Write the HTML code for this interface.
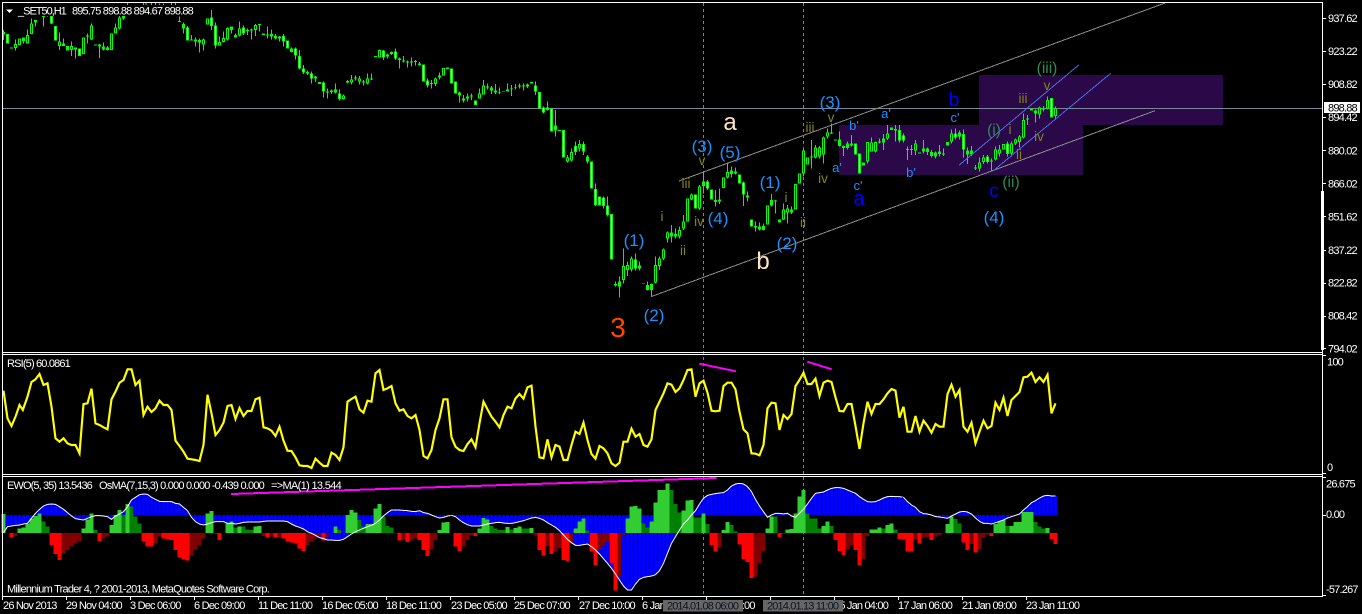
<!DOCTYPE html>
<html><head><meta charset="utf-8"><title>_SET50,H1</title>
<style>html,body{margin:0;padding:0;background:#000;width:1362px;height:614px;overflow:hidden}svg{display:block}text{font-family:"Liberation Sans",sans-serif}.t{fill:#fff;font-size:11px;letter-spacing:-.8px}.w{fill:#1e90ff;font-size:17px;text-anchor:middle}.o{fill:#85851c;font-size:13.5px;text-anchor:middle}.c{fill:#1e90ff;font-size:13px;text-anchor:middle}.g{fill:#2e8b57;font-size:15.5px;text-anchor:middle}</style></head>
<body>
<svg width="1362" height="614" viewBox="0 0 1362 614" xmlns="http://www.w3.org/2000/svg">
<defs>
<pattern id="pa" width="12" height="12" patternUnits="userSpaceOnUse" patternTransform="translate(5.5)"><rect width="9" height="12" fill="#0000ff"/></pattern>
<pattern id="pb" width="12" height="12" patternUnits="userSpaceOnUse" patternTransform="translate(-.5)"><rect width="9" height="12" fill="#0000ff"/></pattern>
</defs>
<rect width="1362" height="614" fill="#000"/>
<!-- purple zones -->
<rect x="979" y="75" width="244" height="50" fill="#2b0848"/>
<rect x="839" y="125" width="244" height="50" fill="#2b0848"/>
<!-- grid -->
<path d="M3 108.5H1322" stroke="#778899" stroke-width="1" shape-rendering="crispEdges"/>
<path d="M703.5 3V596M803.5 3V596" stroke="#808080" stroke-width="1" stroke-dasharray="3 3" shape-rendering="crispEdges"/>
<!-- candles A -->
<g transform="translate(.167 0) scale(.33333)" fill="none" shape-rendering="crispEdges">
<path stroke="#00ff00" stroke-width="3" d="M10 90V120M46 118V152M70 113V130M82 88V130M94 55V102M106 60V80M130 48V80M142 46V50M154 48V72M178 98V150M190 115V138M214 125V168M226 142V176M238 145V168M262 100V130M274 70V120M298 132V174M310 128V152M322 138V152M346 70V100M358 45V88M370 48V60M382 6V15M430 6V15M438 6V15M454 6V15M466 6V15M478 10V15M490 10V15M514 6V15M526 6V15M538 50V65M550 68V100M562 78V122M574 105V122M586 112V140M598 115V158M610 115V152M634 30V90M646 68V145M658 110V136M670 95V128M682 82V122M694 80V100M706 100V113M718 64V110M730 76V105M742 86V105M754 85V118M766 72V108M778 72V95M802 80V116M814 88V118M826 102V118M838 108V125M850 102V140M874 142V158M886 142V178M898 150V208M910 195V222M922 212V225M934 215V250M946 228V246M970 245V293M982 265V296M994 268V282M1006 250V280M1018 268V302M1030 283V298M1042 240V250M1054 225V254M1066 226V242M1078 228V254M1090 240V256M1102 220V254M1114 220V240M1138 148V172M1150 150V180M1162 160V176M1174 155V165M1186 146V180M1198 172V206M1210 168V188M1222 182V202M1234 172V200M1246 180V196M1258 186V196M1282 235V262M1294 240V266M1306 232V258M1318 218V238"/>
<path stroke="#00ff00" stroke-width="9" d="M10 96V104M22 102V130M34 142V146M46 132V144M58 115V135M70 113V123M82 105V130M94 70V102M106 60V68M130 48V51M154 48V70M166 78V122M178 124V138M190 130V138M202 138V152M214 138V150M226 143V148M238 145V168M250 112V162M262 106V110M274 76V118M286 133V137M298 133V140M310 140V148M322 142V150M334 100V150M346 82V100M358 52V86M370 48V55M538 63V66M550 72V86M562 82V122M574 119V122M586 118V124M598 120V128M610 118V134M622 55V74M634 52V78M646 76V136M658 126V136M670 114V126M682 84V118M694 80V90M706 105V112M718 85V106M730 82V100M742 90V93M754 89V92M766 75V90M778 72V75M790 100V105M802 104V107M814 102V110M826 108V115M838 110V116M850 108V124M862 122V146M874 146V156M886 145V166M898 168V206M910 205V218M922 216V220M934 220V236M946 230V236M958 246V252M970 248V275M982 274V278M994 272V276M1006 268V277M1018 280V297M1030 286V297M1042 243V247M1054 238V248M1066 232V236M1078 235V245M1090 245V248M1102 235V251M1114 235V238M1126 168V171M1138 150V172M1150 152V172M1162 164V170M1174 156V162M1186 154V176M1198 175V180M1210 181V184M1222 184V188M1234 185V188M1246 183V186M1258 190V195M1270 194V244M1282 242V256M1294 249V252M1306 235V252M1318 226V232M1330 204V226M1342 203V207"/>
<path stroke="#fff" stroke-width="3" d="M22 105V127M166 81V119M238 148V165M562 85V119M646 79V133M862 125V143M898 171V203M970 251V272M1270 197V241M886 148V163M1018 283V294M1186 157V173M154 51V67M634 55V75M730 85V97M1150 155V169M1282 245V253M850 111V121M910 208V215M934 223V233"/>
<path stroke="#000" stroke-width="3" d="M58 118V132M82 108V127M94 73V99M250 115V159M274 79V115M334 103V147M346 85V97M358 55V83M622 58V71M682 87V115M718 88V103M766 78V87M1102 238V248M1138 153V169M1306 238V249M1330 207V223M1030 289V294M46 135V141M178 127V135M214 141V147M610 121V131M658 129V133M670 117V123M1054 241V245M1078 238V242"/>
</g>
<!-- candles D -->
<g transform="translate(450.167 0) scale(.33333)" fill="none" shape-rendering="crispEdges">
<path stroke="#00ff00" stroke-width="3" d="M28 275V308M40 285V308M52 280V305M64 280V300M88 265V296M100 240V284M112 250V268M124 258V282M136 252V282M148 262V282M172 250V275M184 255V288M196 252V268M208 250V266M220 250V272M232 250V264M256 245V285M280 320V340M292 304V332"/>
<path stroke="#00ff00" stroke-width="9" d="M4 205V250M16 245V280M28 278V286M40 295V302M52 290V296M64 287V290M76 302V315M88 280V296M100 256V283M112 259V262M124 263V272M136 272V278M148 277V279M160 274V276M172 268V274M184 265V267M196 261V263M208 257V259M220 257V259M232 253V260M244 246V250M256 256V274M268 276V326M280 323V338M292 323V330"/>
<path stroke="#fff" stroke-width="3" d="M4 208V247M16 248V277M268 279V323M256 259V271M76 305V312M280 326V335"/>
<path stroke="#000" stroke-width="3" d="M88 283V293M100 259V280"/>
</g>
<!-- candles B -->
<g transform="translate(450.167 80) scale(.33333)" fill="none" shape-rendering="crispEdges">
<path stroke="#00ff00" stroke-width="3" d="M316 90V170M352 225V248M364 205V245M376 185V225M388 180V215M400 185V225M412 225V250M436 310V378M460 350V385M472 350V410M496 605V620M508 590V652M520 505V610M532 545V588M544 530V575M556 520V572M568 545V572M592 605V632M604 610V650M616 530V610M628 530V570M640 505V540M652 455V488M664 435V488M676 445V475M688 440V476M700 405V450M724 340V360M748 315V390M760 275V340M772 300V330M796 330V380M808 325V372M832 248V295M844 260V292M856 262V284M880 305V378M892 335V365M916 425V455M928 428V452M940 430V452M964 342V380M976 360V400M1000 370V420M1012 375V430M1024 380V402M1060 205V290M1084 180V265M1096 195V235M1108 198V235M1120 170V250M1132 145V175M1144 130V162M1168 155V200M1180 196V228M1192 185V208M1204 165V200M1252 186V250M1264 172V215M1276 185V218M1288 175V190"/>
<path stroke="#00ff00" stroke-width="9" d="M304 85V155M316 136V152M328 150V153M340 150V232M352 232V244M364 216V242M376 198V216M388 192V205M400 192V214M412 230V244M424 244V325M436 327V375M448 350V376M460 352V378M472 376V405M484 402V538M496 612V616M508 605V620M520 558V600M532 555V570M544 535V568M556 538V565M568 556V566M580 609V611M592 615V630M604 612V630M616 555V608M628 535V558M640 508V536M652 458V476M664 458V470M676 462V470M688 450V470M700 424V446M712 355V425M724 344V358M736 344V386M748 320V385M760 304V318M772 304V326M784 328V358M796 360V366M808 358V364M820 292V324M832 276V292M844 272V282M856 274V280M868 284V310M880 308V344M892 346V352M904 418V440M916 438V442M928 440V448M940 438V450M952 376V434M964 360V376M976 361V364M988 418V428M1000 388V418M1012 386V398M1024 388V398M1036 312V388M1048 280V310M1060 212V280M1072 232V254M1084 229V232M1096 202V232M1108 202V230M1120 172V224M1132 158V170M1144 157V160M1156 178V182M1168 178V198M1180 198V204M1192 190V204M1204 190V196M1216 190V224M1228 220V280M1240 248V256M1252 186V244M1264 188V214M1276 186V214M1288 185V188"/>
<path stroke="#fff" stroke-width="3" d="M304 88V152M340 153V229M376 201V213M424 247V322M436 330V372M448 353V373M460 355V375M472 379V402M484 405V535M736 347V383M784 331V355M868 287V307M880 311V341M904 421V437M1216 193V221M1228 223V277M400 195V211M772 307V323M556 541V562"/>
<path stroke="#000" stroke-width="3" d="M352 235V241M364 219V239M388 195V202M520 561V597M532 558V567M544 538V565M616 558V605M628 538V555M640 511V533M652 461V473M688 453V467M700 427V443M712 358V422M724 347V355M748 323V382M820 295V321M832 279V289M952 379V431M1000 391V415M1012 389V395M1036 315V385M1048 283V307M1060 215V277M1072 235V251M1096 205V229M1108 205V227M1120 175V221M1132 161V167M1252 189V241M1264 191V211M1276 189V211"/>
</g>
<!-- candles C -->
<g transform="translate(880.167 40) scale(.33333)" fill="none" shape-rendering="crispEdges">
<path stroke="#00ff00" stroke-width="3" d="M10 282V330M22 255V300M46 255V305M58 255V308M70 280V308M82 320V360M94 315V345M106 300V345M130 300V340M142 322V345M154 330V352M166 335V355M178 315V350M190 325V348M214 268V310M226 265V298M238 272V298M250 268V352M262 322V372M274 318V348M286 375V390M298 352V395M310 345V372M322 345V370M334 355V395M346 320V362M358 315V350M382 305V350M394 305V350M406 295V315M418 285V322M430 220V296M442 225V255M466 208V248M478 200V236M490 198V215M502 170V208M526 200V238"/>
<path stroke="#00ff00" stroke-width="9" d="M10 295V308M22 280V296M34 262V270M46 267V272M58 270V302M70 286V302M82 327V330M94 327V330M106 310V332M118 337V340M130 326V334M142 326V336M154 336V348M166 338V350M178 335V342M190 341V344M202 306V316M214 280V305M226 280V292M238 278V290M250 282V328M262 332V344M274 332V344M286 383V386M298 368V386M310 352V366M322 350V366M334 361V364M346 328V358M358 328V340M370 312V328M382 310V342M394 310V340M406 298V310M418 290V306M430 240V292M442 235V238M454 206V212M466 212V220M478 202V224M490 205V208M502 180V205M514 174V232M526 206V228"/>
<path stroke="#fff" stroke-width="3" d="M58 273V299M70 289V299M226 283V289M250 285V325M322 353V363M382 313V339M514 177V229"/>
<path stroke="#000" stroke-width="3" d="M22 283V293M106 313V329M214 283V302M298 371V383M310 355V363M346 331V355M358 331V337M370 315V325M394 313V337M406 301V307M418 293V303M430 243V289M478 205V221M502 183V202M526 209V225"/>
</g>
<!-- channels -->
<g fill="none" shape-rendering="crispEdges">
<path d="M679 181L1165 3M651 296.7L1155 110.7" stroke="#8c8c8c" stroke-width="1"/>
<path d="M959 165.3L1078.7 65M993.3 170.7L1110.7 73.3" stroke="#4a6de5" stroke-width="1"/>
</g>
<!-- indicators left -->
<g transform="translate(.167 350) scale(.33333)" fill="none">
<polyline stroke="#ffff00" stroke-width="6.5" points="10,122 22,205 34,228 46,200 58,165 68,180 82,140 94,96 106,88 118,72 130,105 142,100 154,170 166,265 178,275 190,265 202,280 214,285 226,285 238,310 250,162 262,160 274,116 286,220 298,225 310,232 322,238 334,148 346,125 358,98 370,90 382,58 394,58 406,105 418,92 430,195 442,170 454,186 466,175 478,152 490,165 502,165 514,180 526,272 538,288 550,305 562,326 574,328 586,330 598,333 610,285 622,134 634,190 646,255 658,240 670,218 682,168 694,165 706,207 718,174 730,198 742,183 754,183 766,148 778,143 790,232 802,235 814,242 826,258 838,230 850,272 862,302 874,303 886,322 898,346 910,348 922,348 934,354 946,326 958,338 970,348 982,348 994,308 1006,315 1018,330 1030,292 1042,155 1054,147 1066,140 1078,178 1090,188 1102,152 1114,155 1126,70 1138,60 1150,120 1162,115 1174,108 1186,160 1198,182 1210,178 1222,198 1234,205 1246,195 1258,240 1270,318 1282,325 1294,300 1306,240 1318,205 1330,148 1342,148 1354,262"/>
<polygon fill="url(#pa)" points="5,495 5,548 10,548 22,530 34,528 46,526 58,525 70,522 82,520 94,505 106,490 118,478 130,468 142,463 154,462 166,463 178,470 190,478 202,488 214,498 226,506 238,508 250,510 262,505 274,500 286,497 298,497 310,498 322,500 334,508 346,498 358,492 370,485 382,470 394,450 406,442 418,434 430,432 442,433 454,442 466,448 478,454 490,455 502,455 514,455 526,460 538,462 550,472 562,482 574,502 586,515 598,522 610,525 622,522 634,518 646,515 658,515 670,515 682,520 694,520 706,522 718,520 730,517 742,516 754,516 766,516 778,516 790,514 802,513 814,513 826,513 838,513 850,513 862,515 874,522 886,528 898,532 910,537 922,545 934,550 946,556 958,563 970,566 982,570 994,570 1006,571 1018,571 1030,568 1042,560 1054,552 1066,545 1078,540 1090,535 1102,530 1114,526 1126,520 1138,510 1150,498 1162,488 1174,480 1186,480 1198,480 1210,481 1222,482 1234,484 1246,485 1258,482 1270,488 1282,490 1294,495 1306,500 1318,504 1330,502 1342,498 1350,497 1350,495"/>
<g shape-rendering="crispEdges" stroke-width="12">
<path stroke="#32cd32" d="M10 549V492M58 549V535M70 549V533M82 549V520M94 549V505M106 549V498M118 549V490M250 549V535M262 549V508M274 549V490M334 549V525M346 549V495M358 549V480M382 549V462M622 549V490M634 549V483M682 549V520M694 549V515M718 549V530M766 549V530M778 549V528M1006 549V530M1042 549V495M1054 549V480M1066 549V488M1102 549V522M1114 549V522M1126 549V475M1138 549V462M1318 549V540M1330 549V518M1342 549V516"/>
<path stroke="#008000" d="M130 549V515M142 549V530M286 549V540M370 549V495M394 549V470M406 549V500M418 549V520M706 549V533M730 549V530M742 549V538M754 549V540M1018 549V540M1078 549V510M1090 549V530M1150 549V500M1162 549V528M1174 549V533"/>
<path stroke="#ff0000" d="M34 549V563M154 549V585M166 549V612M178 549V630M298 549V573M430 549V575M442 549V590M454 549V590M490 549V565M502 549V568M514 549V570M526 549V600M538 549V622M550 549V628M562 549V632M658 549V570M802 549V563M826 549V562M850 549V565M862 549V575M874 549V578M886 549V580M898 549V595M910 549V603M970 549V572M1198 549V572M1222 549V576M1258 549V570M1270 549V600M1282 549V618"/>
<path stroke="#800000" d="M46 549V558M190 549V610M202 549V600M214 549V590M226 549V580M238 549V575M310 549V565M322 549V560M466 549V580M478 549V560M574 549V616M586 549V598M598 549V585M610 549V565M646 549V552M790 549V558M814 549V560M838 549V562M922 549V585M934 549V575M946 549V565M958 549V558M982 549V560M1186 549V551M1210 549V570M1234 549V572M1246 549V565M1294 549V598M1306 549V570"/>
</g>
<polyline stroke="#fff" stroke-width="3" points="10,548 22,530 34,528 46,526 58,525 70,522 82,520 94,505 106,490 118,478 130,468 142,463 154,462 166,463 178,470 190,478 202,488 214,498 226,506 238,508 250,510 262,505 274,500 286,497 298,497 310,498 322,500 334,508 346,498 358,492 370,485 382,470 394,450 406,442 418,434 430,432 442,433 454,442 466,448 478,454 490,455 502,455 514,455 526,460 538,462 550,472 562,482 574,502 586,515 598,522 610,525 622,522 634,518 646,515 658,515 670,515 682,520 694,520 706,522 718,520 730,517 742,516 754,516 766,516 778,516 790,514 802,513 814,513 826,513 838,513 850,513 862,515 874,522 886,528 898,532 910,537 922,545 934,550 946,556 958,563 970,566 982,570 994,570 1006,571 1018,571 1030,568 1042,560 1054,552 1066,545 1078,540 1090,535 1102,530 1114,526 1126,520 1138,510 1150,498 1162,488 1174,480 1186,480 1198,480 1210,481 1222,482 1234,484 1246,485 1258,482 1270,488 1282,490 1294,495 1306,500 1318,504 1330,502 1342,498 1354,496"/>
</g>
<!-- indicators middle -->
<g transform="translate(450.167 350) scale(.33333)" fill="none">
<polyline stroke="#ffff00" stroke-width="6.5" points="4,262 16,290 28,300 40,303 52,282 64,268 76,292 88,220 100,155 112,178 124,200 136,215 148,232 160,195 172,170 184,175 196,145 208,132 220,146 232,112 244,107 256,230 268,322 280,325 292,268 304,322 316,285 328,290 340,330 352,330 364,285 376,245 388,252 400,218 412,270 424,312 436,326 448,288 460,295 472,310 484,340 496,348 508,338 520,275 532,275 544,236 556,260 568,252 580,285 592,290 604,268 616,180 628,155 640,130 652,100 664,104 676,126 688,115 700,90 712,60 724,58 736,140 748,100 760,92 772,128 784,182 796,184 808,182 820,108 832,98 844,98 856,118 868,185 880,238 892,250 904,310 916,311 928,316 940,285 952,175 964,158 976,160 988,240 1000,195 1012,207 1024,192 1036,108 1048,90 1060,68 1072,102 1084,102 1096,86 1108,138 1120,98 1132,92 1144,96 1156,142 1168,183 1180,184 1192,162 1204,162 1216,228 1228,297 1240,220 1252,155 1264,192 1276,162 1288,162 1300,148 1312,130 1324,117 1336,122 1348,203 1360,170"/>
<polygon fill="url(#pb)" points="-2,495 -2,496 4,496 16,500 28,510 40,518 52,524 64,528 76,528 88,528 100,525 112,522 124,520 136,518 148,517 160,519 172,520 184,520 196,518 208,515 220,512 232,508 244,504 256,502 268,505 280,510 292,518 304,525 316,532 328,542 340,555 352,568 364,578 376,586 388,586 400,584 412,582 424,590 436,600 448,612 460,626 472,640 484,655 496,672 508,690 520,708 532,720 544,720 556,702 568,688 580,682 592,680 604,678 616,674 628,662 640,640 652,610 664,580 676,560 688,540 700,522 712,510 724,495 736,482 748,462 760,445 772,436 784,433 796,431 808,429 820,428 832,420 844,408 856,402 868,400 880,402 892,410 904,425 916,448 928,468 940,485 952,502 964,495 976,490 988,490 1000,492 1012,490 1024,498 1036,502 1048,490 1060,478 1072,462 1084,445 1096,430 1108,428 1120,426 1132,420 1144,415 1156,413 1168,413 1180,415 1192,420 1204,425 1216,430 1228,440 1240,448 1252,455 1264,456 1276,455 1288,450 1300,444 1312,440 1324,439 1336,440 1348,440 1354,441 1354,495"/>
<g shape-rendering="crispEdges" stroke-width="12">
<path stroke="#32cd32" d="M88 549V535M100 549V504M112 549V508M172 549V531M196 549V534M208 549V530M244 549V534M376 549V536M388 549V515M400 549V506M532 549V505M544 549V470M556 549V468M568 549V476M604 549V515M616 549V458M628 549V420M640 549V420M652 549V400M700 549V482M712 549V452M724 549V450M760 549V490M820 549V540M832 549V516M952 549V535M964 549V500M1012 549V539M1024 549V537M1036 549V490M1048 549V440M1060 549V420M1120 549V528M1132 549V514M1264 549V538M1276 549V538M1288 549V532M1312 549V525M1324 549V520"/>
<path stroke="#008000" d="M124 549V528M136 549V535M148 549V540M160 549V540M184 549V538M220 549V536M232 549V536M412 549V542M580 549V520M592 549V532M664 549V420M676 549V462M688 549V487M736 549V503M748 549V503M772 549V522M844 549V525M856 549V544M976 549V500M1072 549V490M1084 549V505M1096 549V505M1108 549V535M1144 549V528M1300 549V535M1336 549V538"/>
<path stroke="#ff0000" d="M16 549V590M28 549V603M76 549V558M268 549V600M280 549V617M304 549V612M340 549V630M352 549V633M424 549V605M436 549V645M484 549V640M496 549V722M784 549V585M796 549V605M868 549V583M880 549V627M892 549V636M904 549V684M988 549V561M1156 549V570M1168 549V603M1180 549V615M1216 549V600M1228 549V645M1348 549V567"/>
<path stroke="#800000" d="M40 549V590M52 549V570M64 549V556M256 549V557M292 549V588M316 549V605M328 549V594M364 549V580M448 549V600M460 549V588M472 549V575M508 549V680M520 549V555M808 549V592M916 549V680M928 549V640M940 549V605M1000 549V552M1192 549V597M1204 549V585M1240 549V627M1252 549V558"/>
</g>
<polyline stroke="#fff" stroke-width="3" points="4,496 16,500 28,510 40,518 52,524 64,528 76,528 88,528 100,525 112,522 124,520 136,518 148,517 160,519 172,520 184,520 196,518 208,515 220,512 232,508 244,504 256,502 268,505 280,510 292,518 304,525 316,532 328,542 340,555 352,568 364,578 376,586 388,586 400,584 412,582 424,590 436,600 448,612 460,626 472,640 484,655 496,672 508,690 520,708 532,720 544,720 556,702 568,688 580,682 592,680 604,678 616,674 628,662 640,640 652,610 664,580 676,560 688,540 700,522 712,510 724,495 736,482 748,462 760,445 772,436 784,433 796,431 808,429 820,428 832,420 844,408 856,402 868,400 880,402 892,410 904,425 916,448 928,468 940,485 952,502 964,495 976,490 988,490 1000,492 1012,490 1024,498 1036,502 1048,490 1060,478 1072,462 1084,445 1096,430 1108,428 1120,426 1132,420 1144,415 1156,413 1168,413 1180,415 1192,420 1204,425 1216,430 1228,440 1240,448 1252,455 1264,456 1276,455 1288,450 1300,444 1312,440 1324,439 1336,440 1348,440 1360,442"/>
</g>
<!-- indicators right -->
<g transform="translate(900.167 350) scale(.33333)" fill="none">
<polyline stroke="#ffff00" stroke-width="6.5" points="10,170 22,245 34,245 46,198 58,245 70,212 82,228 94,248 106,222 118,230 130,230 142,132 154,104 166,140 178,120 190,230 202,245 214,218 226,280 238,245 250,212 262,235 274,228 286,158 298,180 310,143 322,198 334,150 346,138 358,126 370,82 382,80 394,68 406,96 418,82 430,96 442,74 454,190 466,160"/>
<polygon fill="url(#pa)" points="4,495 4,441 10,442 22,455 34,465 46,472 58,485 70,491 82,492 94,495 106,500 118,501 130,503 142,505 154,498 166,492 178,486 190,484 202,486 214,492 226,504 238,514 250,520 262,520 274,522 286,518 298,514 310,510 322,504 334,500 346,496 358,492 370,480 382,470 394,458 406,452 418,444 430,438 442,436 454,438 466,438 471,438 471,495"/>
<g shape-rendering="crispEdges" stroke-width="12">
<path stroke="#32cd32" d="M142 549V522M154 549V500M286 549V522M298 549V515M310 549V510M334 549V528M346 549V516M358 549V516M370 549V486M382 549V486M394 549V486M442 549V534"/>
<path stroke="#008000" d="M166 549V507M178 549V520M322 549V528M406 549V516M418 549V530M430 549V536"/>
<path stroke="#ff0000" d="M10 549V568M22 549V605M34 549V605M58 549V581M94 549V570M190 549V577M202 549V600M226 549V608M274 549V558M454 549V567M466 549V582"/>
<path stroke="#800000" d="M46 549V568M70 549V563M82 549V561M106 549V559M118 549V555M130 549V551M214 549V582M238 549V597M250 549V562M262 549V553"/>
</g>
<polyline stroke="#fff" stroke-width="3" points="10,442 22,455 34,465 46,472 58,485 70,491 82,492 94,495 106,500 118,501 130,503 142,505 154,498 166,492 178,486 190,484 202,486 214,492 226,504 238,514 250,520 262,520 274,522 286,518 298,514 310,510 322,504 334,500 346,496 358,492 370,480 382,470 394,458 406,452 418,444 430,438 442,436 454,438 466,438"/>
</g>
<!-- magenta trend lines -->
<g fill="none" stroke="#ff00ff" stroke-width="2">
<path d="M699.3 363.7L736 371.3M807.3 361.7L831.7 369.3"/>
<path d="M231 494L716.7 478" shape-rendering="crispEdges"/>
</g>
<!-- frames -->
<g fill="none" stroke="#fff" stroke-width="1" shape-rendering="crispEdges">
<path d="M2.5 2.5H1322.5V596.5H2.5Z"/>
<path d="M2 352.5H1323M2 354.5H1323M2 474.5H1323M2 476.5H1323"/>
<path d="M1323 18.5h3M1323 51.5h3M1323 84.5h3M1323 117.5h3M1323 150.5h3M1323 183.5h3M1323 216.5h3M1323 250.5h3M1323 283.5h3M1323 316.5h3M1323 348.5h3M1323 355.5h3M1323 473.5h3M1323 477.5h3M1323 515.5h3M1323 595.5h3"/>
<path d="M2.5 596V600M66.5 596V600M130.5 596V600M194.5 596V600M258.5 596V600M322.5 596V600M386.5 596V600M450.5 596V600M514.5 596V600M578.5 596V600M642.5 596V600M706.5 596V600M770.5 596V600M834.5 596V600M898.5 596V600M962.5 596V600M1026.5 596V600"/>
</g>
<rect x="1321" y="191" width="3" height="159" fill="#fff"/>
<!-- wave labels -->
<text class="w" x="634" y="246">(1)</text><text class="w" x="654" y="321">(2)</text><text class="w" x="702" y="152">(3)</text><text class="w" x="730" y="158">(5)</text><text class="w" x="718" y="224">(4)</text><text class="w" x="770" y="188">(1)</text><text class="w" x="787" y="249">(2)</text><text class="w" x="830" y="108">(3)</text><text class="w" x="994" y="223">(4)</text>
<text x="730" y="130" font-size="24" fill="#ffe4c4" text-anchor="middle">a</text>
<text x="763" y="269" font-size="24" fill="#ffe4c4" text-anchor="middle">b</text>
<text x="618" y="337" font-size="28" fill="#ff4500" text-anchor="middle">3</text>
<text x="859" y="205" font-size="20" fill="#0000ff" text-anchor="middle">a</text>
<text x="954" y="106" font-size="19" fill="#0000ff" text-anchor="middle">b</text>
<text x="994" y="197" font-size="19" fill="#0000ff" text-anchor="middle">c</text>
<text class="o" x="702" y="165">v</text><text class="o" x="686" y="188">iii</text><text class="o" x="662" y="221">i</text><text class="o" x="683" y="255">ii</text><text class="o" x="699" y="226">iv</text><text class="o" x="810" y="132">iii</text><text class="o" x="831" y="122">v</text><text class="o" x="823" y="183">iv</text><text class="o" x="786" y="202">i</text><text class="o" x="803" y="227">ii</text><text class="o" x="1023" y="103">iii</text><text class="o" x="1047" y="90">v</text><text class="o" x="1010" y="134">i</text><text class="o" x="1019" y="159">ii</text><text class="o" x="1039" y="141">iv</text>
<text class="c" x="837" y="172">a'</text><text class="c" x="854" y="130">b'</text><text class="c" x="858" y="190">c'</text><text class="c" x="886" y="118">a'</text><text class="c" x="955" y="122">c'</text><text class="c" x="911" y="177">b'</text>
<text class="g" x="994" y="135">(i)</text><text class="g" x="1011" y="187">(ii)</text><text class="g" x="1047" y="73">(iii)</text>
<!-- top label -->
<rect x="4" y="5" width="191" height="11" fill="#000"/>
<path d="M6 9.5h7l-3.5 3.5z" fill="#fff"/>
<text class="t" x="18" y="14.5" textLength="48">_SET50,H1</text>
<text class="t" x="72" y="14.5" textLength="121">895.75 898.88 894.67 898.88</text>
<!-- axis -->
<g>
<text class="t" x="1328" y="22">937.62</text><text class="t" x="1328" y="55">923.22</text><text class="t" x="1328" y="88">908.82</text><text class="t" x="1328" y="121">894.42</text><text class="t" x="1328" y="154.5">880.02</text><text class="t" x="1328" y="187.5">866.02</text><text class="t" x="1328" y="220.5">851.62</text><text class="t" x="1328" y="254">837.22</text><text class="t" x="1328" y="286.5">822.82</text><text class="t" x="1328" y="319.5">808.42</text><text class="t" x="1328" y="352.5">794.02</text>
<rect x="1324" y="102" width="36" height="11" fill="#fff"/>
<text x="1328" y="111.5" font-size="11" letter-spacing="-.8" fill="#000">898.88</text>
<text class="t" x="1327" y="365.5">100</text><text class="t" x="1327" y="471">0</text><text class="t" x="1326" y="487.5">26.675</text><text class="t" x="1326" y="518">0.00</text><text class="t" x="1326" y="593">-57.267</text>
</g>
<text class="t" x="7" y="367" textLength="63">RSI(5) 60.0861</text>
<text class="t" x="7" y="489" textLength="85">EWO(5, 35) 13.5436</text>
<text class="t" x="99" y="489" textLength="165">OsMA(7,15,3) 0.000 0.000 -0.439 0.000</text>
<text class="t" x="271" y="489" textLength="70">=&gt;MA(1) 13.544</text>
<text class="t" x="7" y="592.5" textLength="262">Millennium Trader 4, ? 2001-2013, MetaQuotes Software Corp.</text>
<!-- time axis -->
<text class="t" x="3" y="609">26 Nov 2013</text><text class="t" x="66" y="609">29 Nov 04:00</text><text class="t" x="130" y="609">3 Dec 06:00</text><text class="t" x="194" y="609">6 Dec 09:00</text><text class="t" x="258" y="609">11 Dec 11:00</text><text class="t" x="322" y="609">16 Dec 05:00</text><text class="t" x="386" y="609">18 Dec 11:00</text><text class="t" x="451" y="609">23 Dec 05:00</text><text class="t" x="514" y="609">25 Dec 07:00</text><text class="t" x="579" y="609">27 Dec 10:00</text><text class="t" x="642" y="609">6 Jan 07:00</text><text class="t" x="706" y="609">8 Jan 10:00</text><text class="t" x="770" y="609">10 Jan 05:00</text><text class="t" x="834" y="609">15 Jan 04:00</text><text class="t" x="898" y="609">17 Jan 06:00</text><text class="t" x="962" y="609">21 Jan 09:00</text><text class="t" x="1026" y="609">23 Jan 11:00</text>
<rect x="663" y="600" width="80" height="11.5" fill="#666"/>
<text x="667" y="609.5" font-size="11" textLength="72" fill="#0c1420">2014.01.08 06:00</text>
<rect x="763" y="600" width="80" height="11.5" fill="#666"/>
<text x="767" y="609.5" font-size="11" textLength="72" fill="#0c1420">2014.01.13 11:00</text>
</svg>
</body></html>
